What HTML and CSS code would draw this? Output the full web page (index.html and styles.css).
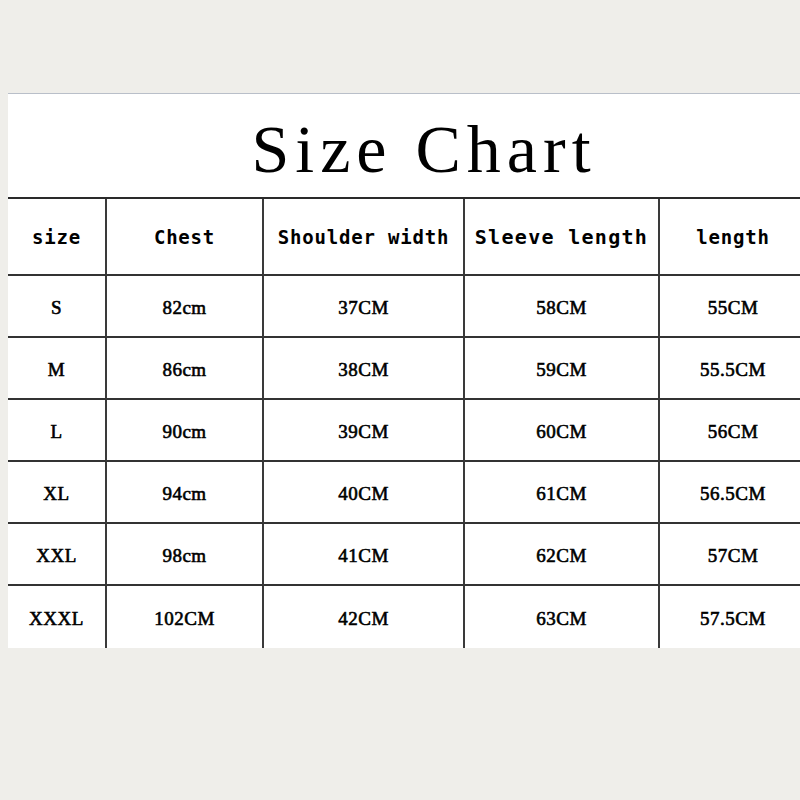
FILE: index.html
```html
<!DOCTYPE html>
<html>
<head>
<meta charset="utf-8">
<title>Size Chart</title>
<link rel="stylesheet" href="styles.css">
</head>
<body>
<div class="panel">
  <div class="title">Size Chart</div>
  <div class="table">
    <div class="cell head">size</div>
    <div class="cell head">Chest</div>
    <div class="cell head">Shoulder width</div>
    <div class="cell head big">Sleeve length</div>
    <div class="cell head last">length</div>

    <div class="cell">S</div><div class="cell">82cm</div><div class="cell">37CM</div><div class="cell">58CM</div><div class="cell last">55CM</div>
    <div class="cell">M</div><div class="cell">86cm</div><div class="cell">38CM</div><div class="cell">59CM</div><div class="cell last">55.5CM</div>
    <div class="cell">L</div><div class="cell">90cm</div><div class="cell">39CM</div><div class="cell">60CM</div><div class="cell last">56CM</div>
    <div class="cell">XL</div><div class="cell">94cm</div><div class="cell">40CM</div><div class="cell">61CM</div><div class="cell last">56.5CM</div>
    <div class="cell">XXL</div><div class="cell">98cm</div><div class="cell">41CM</div><div class="cell">62CM</div><div class="cell last">57CM</div>
    <div class="cell end">XXXL</div><div class="cell end">102CM</div><div class="cell end">42CM</div><div class="cell end">63CM</div><div class="cell last end">57.5CM</div>
  </div>
</div>
</body>
</html>
```
FILE: styles.css
```css
html, body {
  margin: 0;
  padding: 0;
}
body {
  background: #efeeea;
  width: 800px;
  height: 800px;
  overflow: hidden;
}
.panel {
  margin-top: 93px;
  margin-left: 8px;
  width: 798px;
  background: #ffffff;
  border-top: 1px solid #b9bfc9;
}
.title {
  height: 103px;
  box-sizing: border-box;
  padding-top: 8px;
  padding-left: 34px;
  display: flex;
  align-items: center;
  justify-content: center;
  font-family: "Liberation Serif", serif;
  font-size: 68px;
  letter-spacing: 6px;
  color: #000;
}
.table {
  display: grid;
  grid-template-columns: 99px 157px 201px 195px 1fr;
  grid-template-rows: 77px;
  grid-auto-rows: 62px;
  border-top: 2px solid #2a2a2a;
}
.cell {
  box-sizing: border-box;
  border-right: 2px solid #3a3a3a;
  border-bottom: 2px solid #333;
  display: flex;
  align-items: center;
  justify-content: center;
  padding-top: 3px;
  font-family: "Liberation Serif", serif;
  font-size: 19px;
  letter-spacing: 0.5px;
  -webkit-text-stroke: 0.6px #000;
  color: #000;
}
.cell.head {
  padding-top: 0;
  font-family: "DejaVu Sans Mono", monospace;
  font-weight: bold;
  font-size: 19px;
  letter-spacing: 0.8px;
  -webkit-text-stroke: 0;
}
.cell.head.big {
  font-size: 20px;
  letter-spacing: 1.3px;
}
.cell.last {
  border-right: none;
}
.cell.end {
  border-bottom: none;
}
```
